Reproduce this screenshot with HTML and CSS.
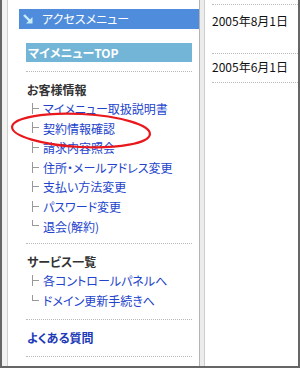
FILE: index.html
```html
<html>
<head>
<meta charset="utf-8">
<link rel="stylesheet" href="styles.css">
<title>アクセスメニュー</title>
</head>
<body>
<div class="frame">
<div class="gutter"></div>
<div class="side">
<div class="access">
<svg class="access-icon" width="11" height="11" viewBox="0 0 11 11">
<path d="M1 1 L8 8" stroke="#c8ecf8" stroke-width="2.4" fill="none"/>
<path d="M3 9.5 L9.5 9.5 L9.5 3 Z" fill="#c8ecf8"/>
</svg>
アクセスメニュー
</div>
<div class="menu">
<div class="top-bar">マイメニューTOP</div>
<div class="section first">
<h2>お客様情報</h2>
<ul>
<li><span class="branch"></span><a href="#">マイメニュー取扱説明書</a></li>
<li><span class="branch"></span><a href="#">契約情報確認</a></li>
<li><span class="branch"></span><a href="#">請求内容照会</a></li>
<li><span class="branch"></span><a href="#">住所・メールアドレス変更</a></li>
<li><span class="branch"></span><a href="#">支払い方法変更</a></li>
<li><span class="branch"></span><a href="#">パスワード変更</a></li>
<li><span class="branch last"></span><a href="#">退会(解約)</a></li>
</ul>
</div>
<div class="section">
<h2>サービス一覧</h2>
<ul>
<li><span class="branch"></span><a href="#">各コントロールパネルへ</a></li>
<li><span class="branch last"></span><a href="#">ドメイン更新手続きへ</a></li>
</ul>
</div>
<div class="section faq">
<a href="#">よくある質問</a>
</div>
</div>
</div>
<div class="divider"></div>
<div class="main">
<div class="news-item tall">2005年8月1日</div>
<div class="news-item">2005年6月1日</div>
</div>
<svg class="mark" width="300" height="368" viewBox="0 0 300 368">
<ellipse cx="81" cy="130.5" rx="69" ry="16.5" transform="rotate(3 81 130.5)" fill="none" stroke="#e8181c" stroke-width="2.2"/>
</svg>
</div>
</body>
</html>
```

FILE: styles.css
```css
body { margin: 0; font-family: "Noto Sans CJK JP", "Liberation Sans", sans-serif; font-size: 12px;
font-feature-settings: "palt"; }
.frame { position: relative; width: 300px; height: 368px; box-sizing: border-box;
border-left: 2px solid #666; border-right: 2px solid #666; border-bottom: 2px solid #666;
display: flex; background: #fff; overflow: hidden; }
.gutter { width: 5px; background: #f2f2f2; border-right: 1px solid #cfcfcf; }
.side { width: 180px; padding-left: 11px; }
.divider { width: 4px; background: #ececec; border-left: 1px solid #b4b4b4; border-right: 1px solid #cdcdcd; }
.main { flex: 1; padding-left: 7px; padding-top: 4px; }

.access { margin-top: 9px; height: 20px; line-height: 20px; background: #4f8cdb; color: #fff;
padding-left: 4px; display: flex; align-items: center; gap: 8px; }
.access-icon { display: block; }

.menu { margin: 0 7px; }
.top-bar { margin-top: 14px; height: 19px; line-height: 19px; background: #72b5d6; color: #fff;
font-weight: bold; padding-left: 2px; }
.section { border-top: 1px dotted #b8b8b8; padding: 9px 0 7px 1px; }
.section.first { margin-top: 9px; }
.section + .section { padding-bottom: 9px; }
.section:last-child { border-bottom: 1px dotted #b8b8b8; }
.section h2 { margin: 0; font-size: 12px; line-height: 18px; color: #333; }
.section ul { list-style: none; margin: 0; padding: 0; }
.section li { height: 19.6px; line-height: 19.6px; display: flex; align-items: center; white-space: nowrap; }
.section a { color: #2243cc; text-decoration: none; }
.faq a { font-weight: bold; color: #1c3ab8; line-height: 18px; display: block; }

.branch { position: relative; width: 11px; height: 12px; margin-left: 5px; flex: none; }
.branch::before { content: ""; position: absolute; left: 0; top: 0; height: 11px; border-left: 1px solid #999; }
.branch::after { content: ""; position: absolute; left: 0; top: 5px; width: 7px; border-top: 1px solid #999; }
.branch.last::before { height: 6px; }

.news-item { border-top: 1px dotted #bbb; height: 28px; padding-top: 7px; line-height: 14px; color: #111; box-sizing: content-box; }
.news-item.tall { height: 39px; padding-top: 9px; }
.news-item:last-child { border-bottom: 1px dotted #bbb; height: 22px; padding-top: 6px; }

.mark { position: absolute; left: -2px; top: 0; pointer-events: none; }
```
